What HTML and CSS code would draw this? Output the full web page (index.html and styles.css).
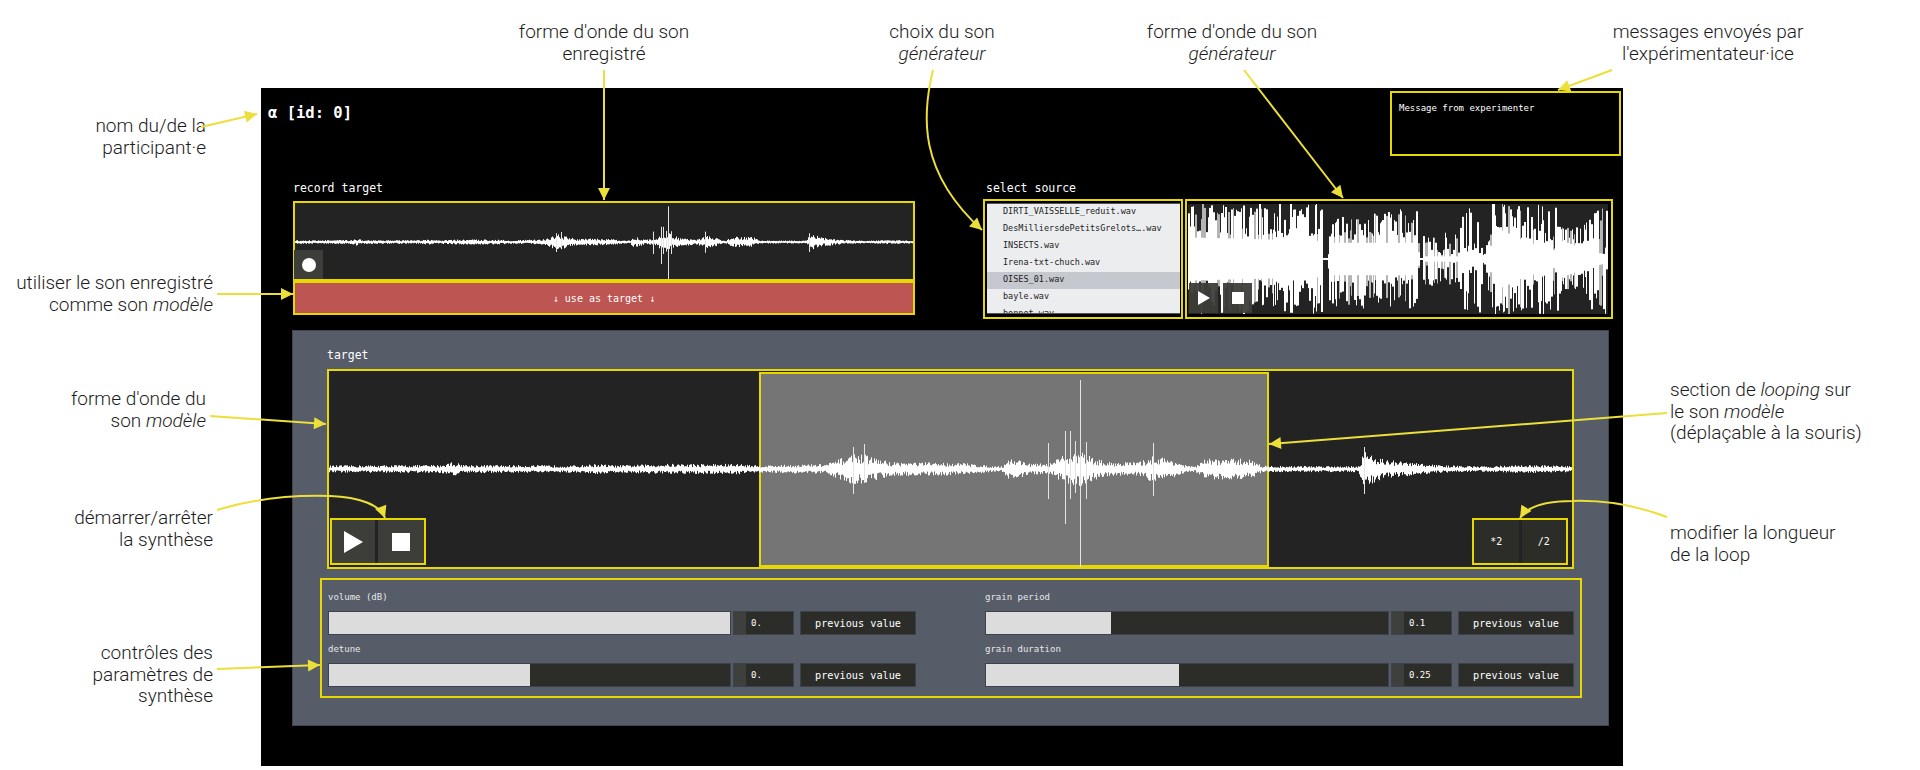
FILE: index.html
```html
<!DOCTYPE html>
<html lang="fr">
<head>
  <meta charset="UTF-8" />
  <title>Interface participant</title>
  <link rel="stylesheet" href="styles.css">
</head>
<body>

  <div class="figure">
    <div class="app">
      <div class="app-top">
        <div class="player-name">α [id: 0]</div>
        <div class="message hl">Message from experimenter</div>
      </div>

      <div class="sources">
        <div class="record-col">
          <div class="label record-label">record target</div>
          <div class="record-wave hl">
            <canvas id="recordWave" width="618" height="76"></canvas>
            <button class="btn btn-record"><span class="dot"></span></button>
          </div>
          <button class="use-target hl">↓ use as target ↓</button>
        </div>

        <div class="source-col">
          <div class="label source-label">select source</div>
          <div class="source-row">
            <div class="file-box hl">
              <ul class="file-list">
                <li>DIRTI_VAISSELLE_reduit.wav</li>
                <li>DesMilliersdePetitsGrelots….wav</li>
                <li>INSECTS.wav</li>
                <li>Irena-txt-chuch.wav</li>
                <li class="selected">OISES_01.wav</li>
                <li>bayle.wav</li>
                <li>bonnot.wav</li>
              </ul>
            </div>
            <div class="source-wave hl">
              <canvas id="sourceWave" width="420" height="110"></canvas>
              <div class="transport-small">
                <button class="btn btn-small"><span class="play"></span></button>
                <button class="btn btn-small"><span class="stop"></span></button>
              </div>
            </div>
          </div>
        </div>
      </div>

      <div class="panel">
        <div class="label target-label">target</div>
        <div class="target-wave hl">
          <div class="loop"></div>
          <canvas id="targetWave" width="1243" height="196"></canvas>
          <div class="transport hl">
            <button class="btn btn-play"><span class="play"></span></button>
            <button class="btn btn-stop"><span class="stop"></span></button>
          </div>
          <div class="loop-size hl">
            <button class="btn btn-size">*2</button>
            <button class="btn btn-size">/2</button>
          </div>
        </div>

        <div class="params hl">
          <div class="param">
            <div class="param-name">volume (dB)</div>
            <div class="param-row">
              <div class="slider"><div class="slider-fill" style="width:100%"></div></div>
              <div class="number">0.</div>
              <button class="previous">previous value</button>
            </div>
          </div>
          <div class="param">
            <div class="param-name">grain period</div>
            <div class="param-row">
              <div class="slider"><div class="slider-fill" style="width:31.2%"></div></div>
              <div class="number">0.1</div>
              <button class="previous">previous value</button>
            </div>
          </div>
          <div class="param">
            <div class="param-name">detune</div>
            <div class="param-row">
              <div class="slider"><div class="slider-fill" style="width:50%"></div></div>
              <div class="number">0.</div>
              <button class="previous">previous value</button>
            </div>
          </div>
          <div class="param">
            <div class="param-name">grain duration</div>
            <div class="param-row">
              <div class="slider"><div class="slider-fill" style="width:47.9%"></div></div>
              <div class="number">0.25</div>
              <button class="previous">previous value</button>
            </div>
          </div>
        </div>
      </div>
    </div>

    <!-- Annotations -->
    <div class="note note-center note-record">forme d'onde du son<br>enregistré</div>
    <div class="note note-center note-choice">choix du son<br><em>générateur</em></div>
    <div class="note note-center note-source">forme d'onde du son<br><em>générateur</em></div>
    <div class="note note-center note-messages">messages envoyés par<br>l'expérimentateur·ice</div>
    <div class="note note-right note-name">nom du/de la<br>participant·e</div>
    <div class="note note-right note-use">utiliser le son enregistré<br>comme son <em>modèle</em></div>
    <div class="note note-right note-model">forme d'onde du<br>son <em>modèle</em></div>
    <div class="note note-right note-start">démarrer/arrêter<br>la synthèse</div>
    <div class="note note-right note-params">contrôles des<br>paramètres de<br>synthèse</div>
    <div class="note note-loop">section de <em>looping</em> sur<br>le son <em>modèle</em><br>(déplaçable à la souris)</div>
    <div class="note note-length">modifier la longueur<br>de la loop</div>

    <svg class="arrows" width="1920" height="770" viewBox="0 0 1920 770">
      <defs>
        <marker id="head" markerUnits="userSpaceOnUse" markerWidth="14" markerHeight="14" refX="13" refY="6" orient="auto">
          <path d="M1 0 L13 6 L1 12 Z" fill="#ecdf3a"/>
        </marker>
      </defs>
      <g fill="none" stroke="#ecdf3a" stroke-width="2">
        <path marker-end="url(#head)" d="M201 127 L257 114"/>
        <path marker-end="url(#head)" d="M604 70 L604 200"/>
        <path marker-end="url(#head)" d="M933 70 C922 115 918 172 982 230"/>
        <path marker-end="url(#head)" d="M1244 70 L1343 198"/>
        <path marker-end="url(#head)" d="M1612 70 L1558 90"/>
        <path marker-end="url(#head)" d="M217 294 L293 294"/>
        <path marker-end="url(#head)" d="M210 416 L326 424"/>
        <path marker-end="url(#head)" d="M217 510 C260 497 300 495 330 496 C360 497 380 505 385 518"/>
        <path marker-end="url(#head)" d="M217 669 L320 665"/>
        <path marker-end="url(#head)" d="M1667 413 L1269 444"/>
        <path marker-end="url(#head)" d="M1667 517 C1630 503 1600 500 1572 501 C1545 501 1527 507 1520 518"/>
      </g>
    </svg>
  </div>

  <script src="script.js"></script>
</body>
</html>
```

FILE: styles.css
```css
* { margin: 0; padding: 0; box-sizing: border-box; }

body {
  height: 770px;
  background: #fff;
  font-family: "DejaVu Sans Mono", "Liberation Mono", monospace;
  overflow: hidden;
}

button {
  font-family: inherit;
  border: none;
  color: #fff;
}

canvas { display: block; }

.figure {
  position: relative;
  width: 1920px;
  height: 770px;
  padding: 88px 0 0 261px;
}

.hl { border: 2px solid #e6d800; }

.app {
  width: 1362px;
  height: 678px;
  background: #000;
  color: #fff;
}

.app-top {
  display: flex;
  justify-content: space-between;
  padding: 3px 2px 0 7px;
}

.player-name {
  margin-top: 14px;
  font-size: 15.5px;
  line-height: 16px;
  font-weight: bold;
}

.message {
  width: 231px;
  height: 65px;
  padding: 9px 7px;
  font-size: 9px;
  line-height: 12px;
}

.label {
  height: 14px;
  font-size: 11.5px;
  line-height: 14px;
}

/* top row */
.sources {
  display: flex;
  gap: 68px;
  margin: 25px 0 0 32px;
}

.record-col { width: 622px; }
.record-label { margin-bottom: 6px; }

.record-wave {
  position: relative;
  height: 80px;
  background: #232323;
}

.btn {
  display: flex;
  align-items: center;
  justify-content: center;
  background: #3d3d3a;
}

.btn-record {
  position: absolute;
  left: -1px;
  bottom: 0;
  width: 29px;
  height: 29px;
}

.dot {
  width: 14px;
  height: 14px;
  border-radius: 50%;
  background: #fff;
}

.use-target {
  display: block;
  width: 622px;
  height: 34px;
  background: #bd5552;
  font-size: 10px;
}

.source-col { width: 630px; }
.source-label { margin-bottom: 4px; padding-left: 3px; }

.source-row {
  display: flex;
  gap: 2px;
  height: 120px;
}

.file-box {
  width: 200px;
  padding: 2px 1px 3px 2px;
}

.file-list {
  height: 111px;
  overflow: hidden;
  list-style: none;
  background: #ecedef;
  border-top: 1px solid #555;
  border-bottom: 1px solid #555;
  color: #222;
  font-size: 8.5px;
}

.file-list li {
  height: 17px;
  padding-left: 16px;
  line-height: 15px;
}

.file-list .selected {
  background: #c5c8ce;
}

.source-wave {
  position: relative;
  width: 428px;
  padding: 3px 3px 3px 1px;
}

.transport-small {
  position: absolute;
  left: 2px;
  bottom: 4px;
  display: flex;
  gap: 5px;
}

.btn-small {
  width: 29px;
  height: 30px;
  background: rgba(61, 61, 58, 0.95);
}

.btn-small .play {
  border-left: 12px solid #fff;
  border-top: 7px solid transparent;
  border-bottom: 7px solid transparent;
}

.btn-small .stop {
  width: 12px;
  height: 12px;
  background: #fff;
}

/* target panel */
.panel {
  width: 1317px;
  height: 396px;
  margin: 11px 0 0 31px;
  padding: 17px 0 0 34px;
  background: #565c68;
  border: 1px solid #41454e;
}

.target-label { margin-bottom: 7px; }

.target-wave {
  position: relative;
  width: 1247px;
  height: 200px;
  background: #232323;
}

.target-wave canvas {
  position: relative;
}

.loop {
  position: absolute;
  left: 430px;
  top: 1px;
  width: 510px;
  height: 195px;
  background: #757575;
  border: 2px solid #e6d800;
}

.transport {
  position: absolute;
  left: 1px;
  bottom: 2px;
  display: flex;
  gap: 3px;
  width: 96px;
  height: 47px;
  background: #232323;
}

.btn-play { width: 43px; }
.btn-stop { width: 46px; }

.btn-play .play {
  border-left: 19px solid #fff;
  border-top: 11px solid transparent;
  border-bottom: 11px solid transparent;
}

.btn-stop .stop {
  width: 18px;
  height: 18px;
  background: #fff;
}

.loop-size {
  position: absolute;
  right: 4px;
  bottom: 2px;
  display: flex;
  gap: 3px;
  width: 96px;
  height: 47px;
  background: #222;
}

.btn-size {
  flex: 1;
  background: #2c2d29;
  font-size: 10px;
}

/* sliders */
.params {
  display: grid;
  grid-template-columns: 588px 589px;
  align-content: start;
  column-gap: 69px;
  row-gap: 7px;
  width: 1262px;
  height: 120px;
  margin: 9px 0 0 -7px;
  padding: 10px 0 0 6px;
}

.param-name {
  height: 14px;
  margin-bottom: 7px;
  color: #e8e8e8;
  font-size: 9px;
  line-height: 14px;
}

.param-row {
  display: flex;
  height: 24px;
}

.slider {
  flex: 1;
  background: #2c2d29;
  border: 1px solid #3e424a;
}

.slider-fill {
  height: 100%;
  background: #dcdcdc;
}

.number {
  width: 61px;
  margin-left: 2px;
  padding-left: 17px;
  background: linear-gradient(to right, #3e403d 12px, #2c2d29 12px);
  border: 1px solid #3e424a;
  font-size: 9px;
  line-height: 22px;
}

.previous {
  width: 116px;
  margin-left: 6px;
  background: #2c2d29;
  border: 1px solid #3e424a;
  font-size: 10.2px;
}

/* annotations */
.note {
  position: absolute;
  color: #1c1c1c;
  font-family: Roboto, "Liberation Sans", sans-serif;
  font-weight: 300;
  font-size: 19px;
  line-height: 21.5px;
  white-space: nowrap;
}

.note-center { width: 260px; text-align: center; }
.note-right { width: 200px; text-align: right; }

.note-record { left: 474px; top: 21px; }
.note-choice { left: 812px; top: 21px; }
.note-source { left: 1102px; top: 21px; }
.note-messages { left: 1578px; top: 21px; }
.note-name { left: 6px; top: 115px; }
.note-use { left: 13px; top: 272px; }
.note-model { left: 6px; top: 388px; }
.note-start { left: 13px; top: 507px; }
.note-params { left: 13px; top: 642px; }
.note-loop { left: 1670px; top: 379px; }
.note-length { left: 1670px; top: 522px; }

.arrows {
  position: absolute;
  left: 0;
  top: 0;
  pointer-events: none;
}
```

FILE: script.js
```js
// Small seeded random so the waveforms stay the same on each load
let seed = 12345;
function rand() {
  seed = (seed * 16807) % 2147483647;
  return seed / 2147483647;
}

// amplitude envelope of the target sound: [position 0..1, amplitude px]
const targetEnv = [
  [0, 3.5], [0.09, 4], [0.098, 7], [0.11, 4], [0.2, 3.5], [0.2156, 5], [0.23, 3.5],
  [0.27, 5], [0.33, 5], [0.345, 3.5], [0.4, 5], [0.411, 10], [0.4216, 15], [0.4304, 14],
  [0.451, 7], [0.51, 6], [0.532, 3], [0.542, 3], [0.5455, 10], [0.556, 9], [0.565, 5],
  [0.582, 6], [0.588, 12], [0.604, 17], [0.615, 11], [0.625, 7], [0.652, 7], [0.663, 13],
  [0.679, 9], [0.69, 3], [0.697, 3], [0.705, 10], [0.741, 10], [0.75, 3.5], [0.755, 3],
  [0.828, 3], [0.8325, 18], [0.85, 9], [0.89, 4], [0.925, 2.5], [0.96, 4], [1, 3]
];

// isolated peaks: [position, up, down]
const targetPeaks = [
  [0.604, 89, 98], [0.592, 38, 55], [0.596, 38, 30], [0.609, 27, 30], [0.5785, 26, 30],
  [0.6, 28, 24], [0.4216, 22, 25], [0.4304, 25, 14], [0.663, 26, 27], [0.8325, 22, 25]
];

function envAt(env, t) {
  for (let i = 1; i < env.length; i++) {
    if (t <= env[i][0]) {
      const a = env[i - 1];
      const b = env[i];
      return a[1] + (b[1] - a[1]) * (t - a[0]) / (b[0] - a[0]);
    }
  }
  return env[env.length - 1][1];
}

function drawTarget(id, scale, mid) {
  const canvas = document.getElementById(id);
  const ctx = canvas.getContext('2d');
  const w = canvas.width;
  ctx.fillStyle = '#fff';
  for (let x = 0; x < w; x++) {
    const amp = envAt(targetEnv, x / w) * Math.max(scale, 0.5);
    const up = Math.max(amp * (0.35 + rand() * 0.7), 0.8);
    const down = Math.max(amp * (0.35 + rand() * 0.7), 0.8);
    ctx.fillRect(x, mid - up, 1, up + down);
  }
  ctx.fillStyle = '#e4e4e4';
  targetPeaks.forEach((p) => {
    ctx.fillRect(Math.round(p[0] * w), mid - p[1] * scale, 1, (p[1] + p[2]) * scale);
  });
}

function drawSource() {
  const canvas = document.getElementById('sourceWave');
  const ctx = canvas.getContext('2d');
  const w = canvas.width;
  const h = canvas.height;
  const mid = 55;
  // tallest bars, and the solid core around the middle
  const peak = [
    [0, 55], [0.32, 54], [0.321, 1], [0.333, 1], [0.335, 48], [0.547, 48], [0.548, 1],
    [0.556, 1], [0.558, 26], [0.64, 28], [0.645, 54], [0.697, 54], [0.7, 3], [0.706, 6],
    [0.72, 55], [0.88, 55], [0.89, 30], [0.94, 32], [0.95, 54], [1, 54]
  ];
  const core = [
    [0, 24], [0.32, 20], [0.321, 1], [0.333, 1], [0.335, 18], [0.547, 18], [0.548, 1],
    [0.556, 1], [0.56, 3], [0.64, 3], [0.645, 2], [0.7, 2], [0.706, 6], [0.745, 32],
    [0.8, 20], [0.885, 8], [0.89, 20], [0.95, 10], [1, 4]
  ];
  ctx.fillStyle = '#232323';
  ctx.fillRect(0, 0, w, h);

  let x = 0;
  while (x < w) {
    const t = x / w;
    const run = 1 + Math.floor(rand() * 2);
    const p = envAt(peak, t);
    const c = envAt(core, t);
    const bar = () => {
      const tall = rand() < 0.55;
      return c * (0.9 + rand() * 0.3) + (p - c) * (tall ? 0.5 + rand() * 0.5 : rand() * 0.3);
    };
    const up = Math.min(bar(), mid);
    const down = Math.min(bar(), mid);
    ctx.fillStyle = rand() < 0.2 ? '#b5b5b5' : '#fff';
    ctx.fillRect(x, mid - up, run, up);
    ctx.fillRect(x, mid, run, down);
    // the solid part stays pure white under the grey bars
    ctx.fillStyle = '#fff';
    ctx.fillRect(x, mid - c * 0.9, run, c * 1.8);
    x += run;
  }
}

drawTarget('targetWave', 1, 98);
drawTarget('recordWave', 0.4, 39);
drawSource();
```
